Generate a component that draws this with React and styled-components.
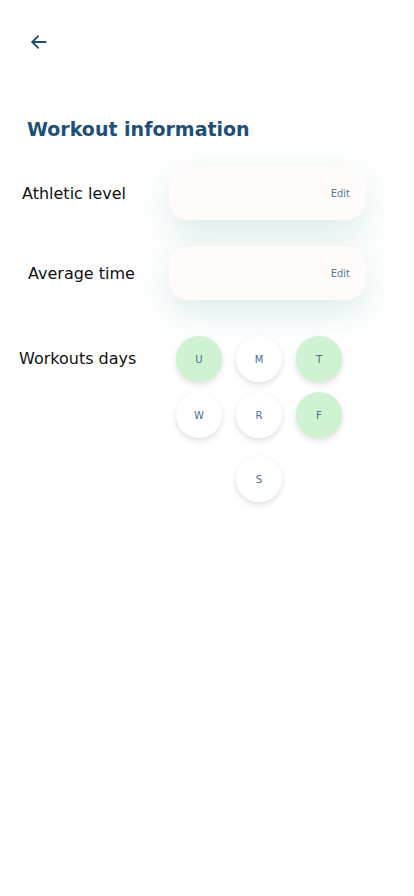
import React from 'react'
import styled, { createGlobalStyle } from 'styled-components'

const GlobalStyle = createGlobalStyle`
  html, body {
    margin: 0;
    padding: 0;
    background: #ffffff;
    font-family: "DejaVu Sans", "Noto Sans", sans-serif;
  }
`;

const days = [
  { letter: 'U', active: true },
  { letter: 'M', active: false },
  { letter: 'T', active: true },
  { letter: 'W', active: false },
  { letter: 'R', active: false },
  { letter: 'F', active: true },
  { letter: 'S', active: false },
];

function App() {
  return (
    <Page>
      <GlobalStyle />
      <TopBar>
        <BackButton aria-label="Back">
          <svg width="20" height="20" viewBox="0 0 24 24" fill="none" stroke="#1d4f73" strokeWidth="2.2" strokeLinecap="round" strokeLinejoin="round">
            <path d="M20 12H4" />
            <path d="M11 5l-7 7 7 7" />
          </svg>
        </BackButton>
      </TopBar>

      <Title>Workout information</Title>

      <Row>
        <Label>Athletic level</Label>
        <Card>
          <EditLink>Edit</EditLink>
        </Card>
      </Row>

      <Row>
        <Label $shift={6}>Average time</Label>
        <Card>
          <EditLink>Edit</EditLink>
        </Card>
      </Row>

      <DaysRow>
        <Label $shift={-3}>Workouts days</Label>
        <DaysGrid>
          {days.map(day => (
            <Day key={day.letter} $active={day.active} $last={day.letter === 'S'}>
              {day.letter}
            </Day>
          ))}
        </DaysGrid>
      </DaysRow>
    </Page>
  );
}

const Page = styled.div`
  width: 414px;
  min-height: 896px;
  background: #ffffff;
  display: flex;
  flex-direction: column;
`;

const TopBar = styled.div`
  height: 84px;
  display: flex;
  align-items: center;
  padding-left: 28px;
`;

const BackButton = styled.button`
  border: none;
  background: none;
  padding: 0;
  width: 22px;
  height: 22px;
  display: flex;
  align-items: center;
  justify-content: center;
  cursor: pointer;
`;

const Title = styled.h1`
  margin: 33px 0 0 27px;
  font-size: 19px;
  font-weight: 700;
  color: #1e5077;
  line-height: 24px;
`;

const Row = styled.div`
  display: flex;
  align-items: center;
  margin-top: 25px;
  & + & {
    margin-top: 26px;
  }
`;

const Label = styled.span`
  width: 150px;
  padding-left: ${p => 22 + (p.$shift || 0)}px;
  box-sizing: border-box;
  font-size: 16px;
  color: #111111;
  white-space: nowrap;
`;

const Card = styled.div`
  margin-left: 19px;
  width: 197px;
  height: 54px;
  border-radius: 20px;
  background: #fffbfa;
  box-shadow: 0 12px 36px rgba(110, 175, 175, 0.25);
  display: flex;
  align-items: center;
  justify-content: flex-end;
  padding-right: 16px;
  box-sizing: border-box;
`;

const EditLink = styled.span`
  font-size: 10px;
  color: #5b7b96;
  cursor: pointer;
`;

const DaysRow = styled.div`
  display: flex;
  align-items: flex-start;
  margin-top: 36px;
  ${Label} {
    margin-top: 13px;
  }
`;

const DaysGrid = styled.div`
  margin-left: 26px;
  display: grid;
  grid-template-columns: repeat(3, 46px);
  column-gap: 14px;
  row-gap: 10px;
`;

const Day = styled.div`
  width: 46px;
  height: 46px;
  border-radius: 50%;
  background: ${p => (p.$active ? '#cff2d2' : '#ffffff')};
  box-shadow: 0 3px 6px rgba(0, 0, 0, 0.12);
  display: flex;
  align-items: center;
  justify-content: center;
  font-size: 10px;
  color: #4a6d8a;
  grid-column: ${p => (p.$last ? '2' : 'auto')};
  margin-top: ${p => (p.$last ? '8px' : '0')};
`;

export default App
